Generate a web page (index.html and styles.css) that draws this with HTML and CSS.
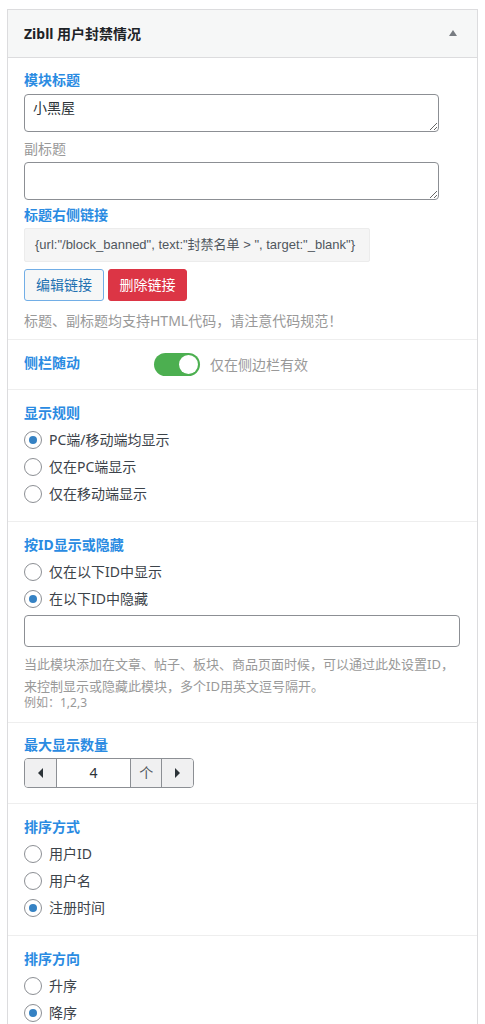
FILE: index.html
```html
<!DOCTYPE html>
<html lang="zh-CN">
<head>
<meta charset="utf-8">
<title>Zibll 用户封禁情况</title>
<link rel="stylesheet" href="styles.css">
</head>
<body>
<div class="panel">
  <div class="panel-head">
    <h2 class="panel-title">Zibll 用户封禁情况</h2>
    <span class="toggle"></span>
  </div>
  <div class="panel-body">
    <div class="field field-first">
      <div class="label">模块标题</div>
      <textarea class="ta">小黑屋</textarea>
      <div class="sublabel">副标题</div>
      <textarea class="ta"></textarea>
      <div class="label label-link">标题右侧链接</div>
      <div class="codebox">{url:"/block_banned", text:"封禁名单 &gt; ", target:"_blank"}</div>
      <div class="btns">
        <button class="btn btn-edit">编辑链接</button>
        <button class="btn btn-del">删除链接</button>
      </div>
      <div class="help">标题、副标题均支持HTML代码，请注意代码规范！</div>
    </div>

    <div class="field field-row">
      <div class="label label-side">侧栏随动</div>
      <span class="switch"><span class="knob"></span></span>
      <span class="switch-text">仅在侧边栏有效</span>
    </div>

    <div class="field field-radio">
      <div class="label">显示规则</div>
      <ul class="radios">
        <li class="radio"><span class="dot on"></span>PC端/移动端均显示</li>
        <li class="radio"><span class="dot"></span>仅在PC端显示</li>
        <li class="radio"><span class="dot"></span>仅在移动端显示</li>
      </ul>
    </div>

    <div class="field field-ids">
      <div class="label">按ID显示或隐藏</div>
      <ul class="radios">
        <li class="radio"><span class="dot"></span>仅在以下ID中显示</li>
        <li class="radio"><span class="dot on"></span>在以下ID中隐藏</li>
      </ul>
      <input class="text-input" type="text">
      <div class="desc">当此模块添加在文章、帖子、板块、商品页面时候，可以通过此处设置ID，来控制显示或隐藏此模块，多个ID用英文逗号隔开。</div>
      <div class="example">例如：1,2,3</div>
    </div>

    <div class="field field-num">
      <div class="label">最大显示数量</div>
      <div class="spinner">
        <span class="spin-btn"><span class="tri tri-left"></span></span>
        <span class="spin-val">4</span>
        <span class="spin-unit">个</span>
        <span class="spin-btn spin-btn-r"><span class="tri tri-right"></span></span>
      </div>
    </div>

    <div class="field field-radio">
      <div class="label">排序方式</div>
      <ul class="radios">
        <li class="radio"><span class="dot"></span>用户ID</li>
        <li class="radio"><span class="dot"></span>用户名</li>
        <li class="radio"><span class="dot on"></span>注册时间</li>
      </ul>
    </div>

    <div class="field field-radio">
      <div class="label">排序方向</div>
      <ul class="radios">
        <li class="radio"><span class="dot"></span>升序</li>
        <li class="radio radio-last"><span class="dot on"></span>降序</li>
      </ul>
    </div>
  </div>
</div>
</body>
</html>
```

FILE: styles.css
```css
* { box-sizing: border-box; }

body {
  margin: 0;
  background: #fff;
  font-family: "Noto Sans", "Noto Sans CJK SC", sans-serif;
  font-size: 14px;
  color: #3c434a;
}

.panel {
  margin: 9px 0 0 7px;
  width: 471px;
  border: 1px solid #dcdcde;
  border-bottom: none;
  background: #fff;
}

.panel-head {
  height: 48px;
  background: #f6f7f7;
  border-bottom: 1px solid #dcdcde;
  display: flex;
  align-items: center;
  justify-content: space-between;
  padding: 0 20px 0 16px;
}

.panel-title {
  margin: 0;
  font-size: 14px;
  font-weight: 700;
  color: #1d2327;
  line-height: 20px;
}

.toggle {
  width: 0;
  height: 0;
  border-left: 4px solid transparent;
  border-right: 4px solid transparent;
  border-bottom: 6px solid #787c82;
  margin-top: -2px;
}

.field {
  padding: 13px 17px 14px 16px;
  border-bottom: 1px solid #eeeeee;
}

.field-first { padding-top: 12px; padding-bottom: 8px; }

.label {
  font-weight: 700;
  font-size: 14px;
  line-height: 20px;
  color: #2a8be2;
}

.ta {
  display: block;
  width: 415px;
  height: 38px;
  margin-top: 4px;
  padding: 3px 8px;
  border: 1px solid #8c8f94;
  border-radius: 4px;
  font-family: inherit;
  font-size: 14px;
  line-height: 20px;
  color: #2c3338;
  resize: vertical;
  background: #fff;
}

.sublabel {
  margin-top: 7px;
  line-height: 20px;
  color: #999;
}

.sublabel + .ta { margin-top: 3px; }

.label-link { margin-top: 5px; }

.codebox {
  margin-top: 3px;
  width: 346px;
  height: 34px;
  padding: 0 10px;
  background: #f5f5f5;
  border: 1px solid #ececec;
  border-radius: 2px;
  font-family: "Liberation Sans", "Noto Sans CJK SC", sans-serif;
  font-size: 13px;
  line-height: 32px;
  color: #50575e;
  white-space: nowrap;
}

.btns {
  display: flex;
  gap: 4px;
  margin-top: 7px;
}

.btn {
  height: 32px;
  width: 80px;
  padding: 0;
  border-radius: 3px;
  font-family: inherit;
  font-size: 14px;
  line-height: 30px;
}

.btn-edit {
  background: #f6f7f7;
  border: 1px solid #72aee6;
  color: #2271b1;
}

.btn-del {
  width: 79px;
  background: #dc3545;
  border: 1px solid #dc3545;
  color: #fff;
}

.help {
  margin-top: 10px;
  line-height: 20px;
  color: #999;
}

.field-row {
  display: flex;
  align-items: center;
  padding-top: 13px;
  padding-bottom: 13px;
}

.label-side {
  width: 130px;
  margin-top: -3px;
}

.switch {
  position: relative;
  width: 46px;
  height: 23px;
  border-radius: 12px;
  background: #4caf50;
}

.knob {
  position: absolute;
  top: 2px;
  right: 2px;
  width: 19px;
  height: 19px;
  border-radius: 50%;
  background: #fff;
}

.switch-text {
  margin-left: 10px;
  color: #999;
  line-height: 20px;
}

.radios {
  list-style: none;
  margin: 3px 0 0;
  padding: 0;
}

.radio {
  display: flex;
  align-items: center;
  height: 27px;
  color: #3c434a;
  line-height: 20px;
}

.dot {
  position: relative;
  width: 18px;
  height: 18px;
  border: 1px solid #8c8f94;
  border-radius: 50%;
  margin-right: 7px;
  background: #fff;
  flex-shrink: 0;
}

.dot.on::after {
  content: "";
  position: absolute;
  top: 4px;
  left: 4px;
  width: 8px;
  height: 8px;
  border-radius: 50%;
  background: #3582c4;
}

.field-radio { padding-bottom: 14px; }

.text-input {
  display: block;
  width: 436px;
  height: 32px;
  margin-top: 3px;
  border: 1px solid #8c8f94;
  border-radius: 4px;
  background: #fff;
}

.desc {
  margin-top: 6px;
  font-size: 13px;
  line-height: 22px;
  color: #999;
}

.example {
  margin-top: -2px;
  font-size: 12px;
  line-height: 16px;
  color: #999;
}

.field-ids { padding-bottom: 11px; }

.field-num { padding-top: 12px; padding-bottom: 15px; }

.spinner {
  display: flex;
  margin-top: 3px;
  width: 170px;
  height: 30px;
  border: 1px solid #8c8f94;
  border-radius: 4px;
  overflow: hidden;
}

.spin-btn {
  width: 32px;
  display: flex;
  align-items: center;
  justify-content: center;
  background: #f0f0f1;
  border-right: 1px solid #8c8f94;
}

.spin-btn-r {
  width: 31px;
  border-right: none;
}

.spin-val {
  width: 75px;
  text-align: center;
  line-height: 28px;
  color: #2c3338;
  font-size: 14px;
  border-right: 1px solid #8c8f94;
}

.spin-unit {
  width: 31px;
  text-align: center;
  line-height: 28px;
  background: #f0f0f1;
  color: #50575e;
  border-right: 1px solid #8c8f94;
}

.tri {
  width: 0;
  height: 0;
  border-top: 5px solid transparent;
  border-bottom: 5px solid transparent;
}

.tri-left { border-right: 5px solid #2c3338; }
.tri-right { border-left: 5px solid #2c3338; }
```
